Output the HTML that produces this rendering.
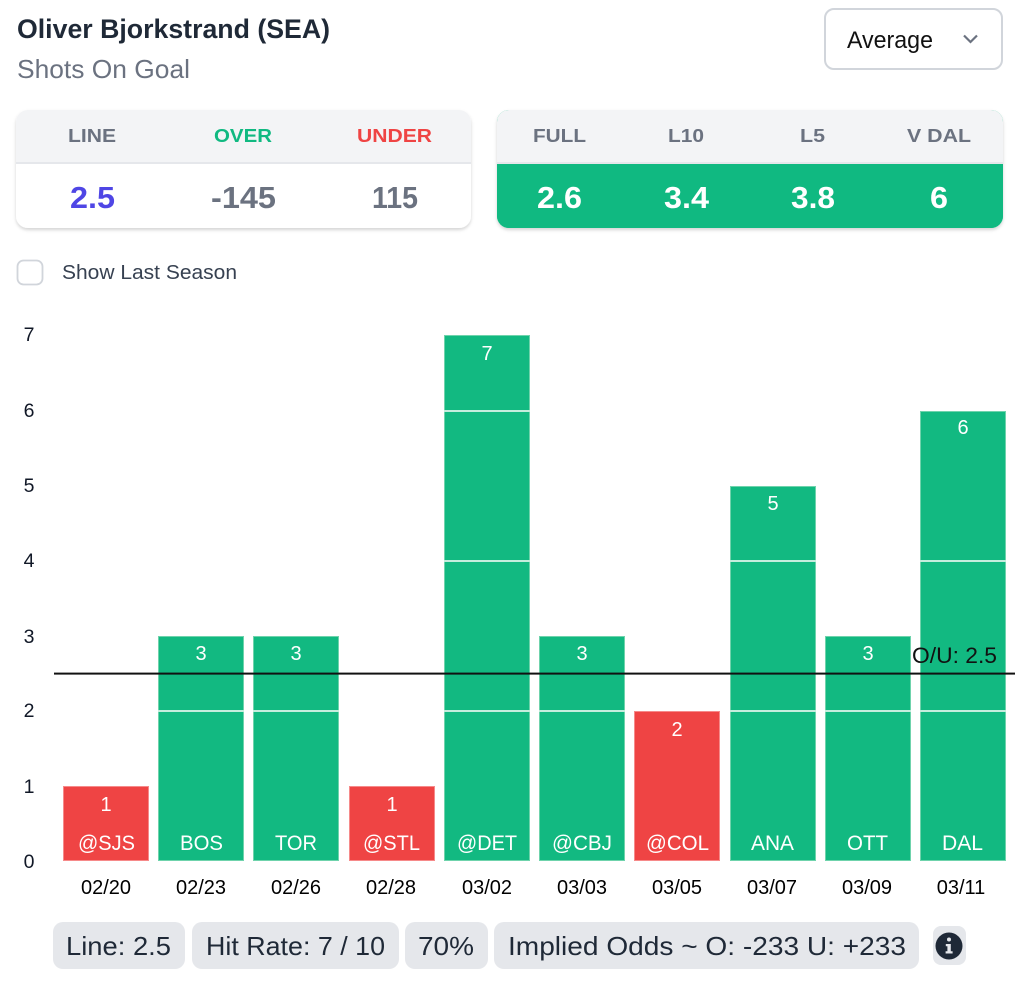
<!DOCTYPE html>
<html><head><meta charset="utf-8"><style>
html,body{margin:0;padding:0;background:#fff;width:1024px;height:995px;overflow:hidden}
svg{display:block}
text{font-family:"Liberation Sans",sans-serif}
.h{font-weight:700;font-size:18.500px;fill:#6b7280}
.v{font-weight:700;font-size:31px;text-anchor:start}
.y{font-size:19.500px;fill:#111827;text-anchor:middle}
.n{font-size:20px;fill:#fff;text-anchor:middle}
.t{font-size:21px;fill:#fff}
.d{font-size:20px;fill:#000;text-anchor:middle}
.p{font-size:26px;fill:#1f2937}
</style></head><body>
<svg width="1024" height="995" viewBox="0 0 1024 995" xmlns="http://www.w3.org/2000/svg">
<defs>
<filter id="s" x="-5%" y="-10%" width="110%" height="125%"><feDropShadow dx="0" dy="2" stdDeviation="1.6" flood-color="#000" flood-opacity=".17"/></filter>
<clipPath id="c1"><rect x="16" y="110" width="455" height="118" rx="12"/></clipPath>
<clipPath id="c2"><rect x="497" y="110" width="506" height="118" rx="12"/></clipPath>
</defs>
<text x="17" y="38" font-size="26.500" font-weight="700" fill="#1f2937" textLength="313" lengthAdjust="spacingAndGlyphs">Oliver Bjorkstrand (SEA)</text>
<text x="17" y="78" font-size="26" fill="#6b7280" textLength="173" lengthAdjust="spacingAndGlyphs">Shots On Goal</text>
<rect x="825" y="9" width="177" height="60" rx="9" fill="#fff" stroke="#d1d5db" stroke-width="2"/>
<text x="847" y="48" font-size="24" fill="#111" textLength="86" lengthAdjust="spacingAndGlyphs">Average</text>
<path d="M964 35.500L970.500 42L977 35.500" fill="none" stroke="#6b7280" stroke-width="2.200"/>

<rect x="16" y="110" width="455" height="118" rx="12" fill="#fff" filter="url(#s)"/>
<g clip-path="url(#c1)"><rect x="16" y="110" width="455" height="52" fill="#f3f4f6"/><rect x="16" y="162" width="455" height="2" fill="#e5e7eb"/></g>
<text class="h" x="68" y="142" textLength="48" lengthAdjust="spacingAndGlyphs">LINE</text>
<text class="h" x="214" y="142" style="fill:#10b981" textLength="58" lengthAdjust="spacingAndGlyphs">OVER</text>
<text class="h" x="357" y="142" style="fill:#ef4444" textLength="75" lengthAdjust="spacingAndGlyphs">UNDER</text>
<text class="v" x="70" y="208" fill="#4f46e5" textLength="45" lengthAdjust="spacingAndGlyphs">2.5</text>
<text class="v" x="211" y="208" fill="#6b7280" textLength="65" lengthAdjust="spacingAndGlyphs">-145</text>
<text class="v" x="372" y="208" fill="#6b7280" textLength="46" lengthAdjust="spacingAndGlyphs">115</text>

<rect x="497" y="110" width="506" height="118" rx="12" fill="#10b981" filter="url(#s)"/>
<g clip-path="url(#c2)"><rect x="497" y="110" width="506" height="52" fill="#f3f4f6"/><rect x="497" y="162" width="506" height="2" fill="#e5e7eb"/><rect x="497" y="164" width="506" height="64" fill="#10b981"/></g>
<text class="h" x="533" y="142" textLength="53" lengthAdjust="spacingAndGlyphs">FULL</text>
<text class="h" x="668" y="142" textLength="36" lengthAdjust="spacingAndGlyphs">L10</text>
<text class="h" x="800" y="142" textLength="25" lengthAdjust="spacingAndGlyphs">L5</text>
<text class="h" x="907" y="142" textLength="64" lengthAdjust="spacingAndGlyphs">V DAL</text>
<text class="v" x="537" y="208" fill="#fff" textLength="45" lengthAdjust="spacingAndGlyphs">2.6</text>
<text class="v" x="664" y="208" fill="#fff" textLength="45" lengthAdjust="spacingAndGlyphs">3.4</text>
<text class="v" x="791" y="208" fill="#fff" textLength="44" lengthAdjust="spacingAndGlyphs">3.8</text>
<text class="v" x="930" y="208" fill="#fff" textLength="18" lengthAdjust="spacingAndGlyphs">6</text>

<rect x="17.500" y="260.500" width="25" height="24" rx="6" fill="#fff" stroke="#d1d5db" stroke-width="1.800"/>
<text x="62" y="279" font-size="20" fill="#374151" textLength="175" lengthAdjust="spacingAndGlyphs">Show Last Season</text>

<text class="y" x="29" y="341">7</text>
<text class="y" x="29" y="417">6</text>
<text class="y" x="29" y="492">5</text>
<text class="y" x="29" y="567">4</text>
<text class="y" x="29" y="643">3</text>
<text class="y" x="29" y="717">2</text>
<text class="y" x="29" y="793">1</text>
<text class="y" x="29" y="868">0</text>

<g fill="#12b981" stroke="#6fd3ac" stroke-width="1">
<rect x="158.500" y="636.500" width="85" height="224"/>
<rect x="253.500" y="636.500" width="85" height="224"/>
<rect x="444.500" y="335.500" width="85" height="525"/>
<rect x="539.500" y="636.500" width="85" height="224"/>
<rect x="730.500" y="486.500" width="85" height="374"/>
<rect x="825.500" y="636.500" width="85" height="224"/>
<rect x="920.500" y="411.500" width="85" height="449"/>
</g>
<g fill="#ef4444" stroke="#f68a8a" stroke-width="1">
<rect x="63.500" y="786.500" width="85" height="74"/>
<rect x="349.500" y="786.500" width="85" height="74"/>
<rect x="634.500" y="711.500" width="85" height="149"/>
</g>
<g fill="#c4eddd">
<rect x="158" y="710" width="86" height="2"/>
<rect x="253" y="710" width="86" height="2"/>
<rect x="444" y="410" width="86" height="2"/>
<rect x="444" y="560" width="86" height="2"/>
<rect x="444" y="710" width="86" height="2"/>
<rect x="539" y="710" width="86" height="2"/>
<rect x="730" y="560" width="86" height="2"/>
<rect x="730" y="710" width="86" height="2"/>
<rect x="825" y="710" width="86" height="2"/>
<rect x="920" y="560" width="86" height="2"/>
<rect x="920" y="710" width="86" height="2"/>
</g>

<text class="n" x="106" y="811">1</text>
<text class="n" x="201" y="660">3</text>
<text class="n" x="296" y="660">3</text>
<text class="n" x="392" y="811">1</text>
<text class="n" x="487" y="360">7</text>
<text class="n" x="582" y="660">3</text>
<text class="n" x="677" y="736">2</text>
<text class="n" x="773" y="510">5</text>
<text class="n" x="868" y="660">3</text>
<text class="n" x="963" y="434">6</text>

<text class="t" x="78" y="850" textLength="57" lengthAdjust="spacingAndGlyphs">@SJS</text>
<text class="t" x="180" y="850" textLength="43" lengthAdjust="spacingAndGlyphs">BOS</text>
<text class="t" x="275" y="850" textLength="42" lengthAdjust="spacingAndGlyphs">TOR</text>
<text class="t" x="363" y="850" textLength="57" lengthAdjust="spacingAndGlyphs">@STL</text>
<text class="t" x="457" y="850" textLength="60" lengthAdjust="spacingAndGlyphs">@DET</text>
<text class="t" x="552" y="850" textLength="60" lengthAdjust="spacingAndGlyphs">@CBJ</text>
<text class="t" x="646" y="850" textLength="63" lengthAdjust="spacingAndGlyphs">@COL</text>
<text class="t" x="751" y="850" textLength="43" lengthAdjust="spacingAndGlyphs">ANA</text>
<text class="t" x="847" y="850" textLength="41" lengthAdjust="spacingAndGlyphs">OTT</text>
<text class="t" x="942" y="850" textLength="41" lengthAdjust="spacingAndGlyphs">DAL</text>

<text class="d" x="106" y="894">02/20</text>
<text class="d" x="201" y="894">02/23</text>
<text class="d" x="296" y="894">02/26</text>
<text class="d" x="391" y="894">02/28</text>
<text class="d" x="487" y="894">03/02</text>
<text class="d" x="582" y="894">03/03</text>
<text class="d" x="677" y="894">03/05</text>
<text class="d" x="772" y="894">03/07</text>
<text class="d" x="867" y="894">03/09</text>
<text class="d" x="961" y="894">03/11</text>

<rect x="54" y="672.600" width="961" height="2" fill="#111"/>
<text x="912" y="663" font-size="22.500" fill="#111" textLength="85" lengthAdjust="spacingAndGlyphs">O/U: 2.5</text>

<g fill="#e5e7eb">
<rect x="53" y="922" width="132" height="47" rx="10"/>
<rect x="192" y="922" width="207" height="47" rx="10"/>
<rect x="405" y="922" width="83" height="47" rx="10"/>
<rect x="494" y="922" width="425" height="47" rx="10"/>
<rect x="933" y="926" width="33" height="39" rx="8"/>
</g>
<text class="p" x="66" y="955" textLength="105" lengthAdjust="spacingAndGlyphs">Line: 2.5</text>
<text class="p" x="206" y="955" textLength="179" lengthAdjust="spacingAndGlyphs">Hit Rate: 7 / 10</text>
<text class="p" x="418" y="955" textLength="56" lengthAdjust="spacingAndGlyphs">70%</text>
<text class="p" x="508" y="955" textLength="398" lengthAdjust="spacingAndGlyphs">Implied Odds ~ O: -233 U: +233</text>
<circle cx="949" cy="946" r="13.500" fill="#1f2937"/>
<circle cx="949" cy="939.500" r="2" fill="#e5e7eb"/>
<path d="M945.800 944H950.800V951.300H952.600V953.500H945.600V951.300H947.400V946.200H945.800Z" fill="#e5e7eb"/>
</svg>
</body></html>
